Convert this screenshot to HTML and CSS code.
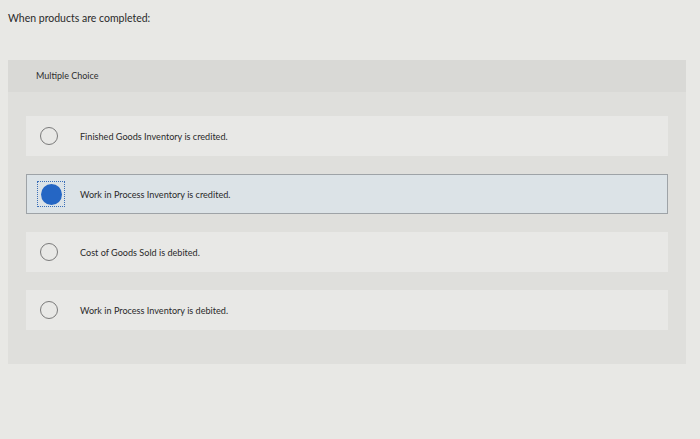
FILE: index.html
```html
<!DOCTYPE html>
<html lang="en">
<head>
    <meta charset="UTF-8">
    <meta name="viewport" content="width=device-width, initial-scale=1.0">
    <title>Question</title>
    <link rel="stylesheet" href="styles.css">
</head>
<body>
    <p class="prompt">When products are completed:</p>

    <!-- Answer panel -->
    <div class="panel">
        <div class="panel-head">Multiple Choice</div>
        <div class="choices">
            <label class="choice">
                <span class="radio"></span>
                <span class="choice-text">Finished Goods Inventory is credited.</span>
            </label>
            <label class="choice selected">
                <span class="focus"><span class="radio"></span></span>
                <span class="choice-text">Work in Process Inventory is credited.</span>
            </label>
            <label class="choice">
                <span class="radio"></span>
                <span class="choice-text">Cost of Goods Sold is debited.</span>
            </label>
            <label class="choice">
                <span class="radio"></span>
                <span class="choice-text">Work in Process Inventory is debited.</span>
            </label>
        </div>
    </div>
</body>
</html>
```

FILE: styles.css
```css
* {
    margin: 0;
    padding: 0;
    box-sizing: border-box;
}

body {
    width: 700px;
    height: 439px;
    overflow: hidden;
    background: #e8e8e5;
    color: #2a2a2a;
    font-family: Lato, "Liberation Sans", sans-serif;
    padding: 11px 8px 0 8px;
}

.prompt {
    font-size: 10.5px;
    line-height: 14px;
}

/* Panel */
.panel {
    margin-top: 35px;
    width: 678px;
    background: #dfdfdc;
    padding-bottom: 34px;
}

.panel-head {
    background: #d9d9d6;
    padding: 10px 0 0 28px;
    height: 32px;
    font-size: 9px;
    color: #2e2e2e;
}

.choices {
    display: flex;
    flex-direction: column;
    gap: 18px;
    padding: 24px 0 0 18px;
}

.choice {
    display: flex;
    align-items: center;
    width: 642px;
    height: 40px;
    background: #e8e8e6;
    border: 1px solid transparent;
    font-size: 9.1px;
    color: #2a2a2a;
}

.choice.selected {
    background: #dce3e7;
    border-color: #9ea3a7;
}

.radio {
    width: 18px;
    height: 18px;
    border: 1px solid #7a7a7a;
    border-radius: 50%;
    margin-left: 13px;
    flex-shrink: 0;
}

.focus {
    width: 28px;
    height: 26px;
    margin-left: 10px;
    border: 1px dotted #3a6fb8;
    display: flex;
    align-items: center;
    justify-content: center;
    flex-shrink: 0;
}

.focus .radio {
    margin-left: 0;
    width: 21px;
    height: 21px;
    border: none;
    background: #2566c4;
}

.choice-text {
    margin-left: 22px;
}

.selected .choice-text {
    margin-left: 15px;
}
```
